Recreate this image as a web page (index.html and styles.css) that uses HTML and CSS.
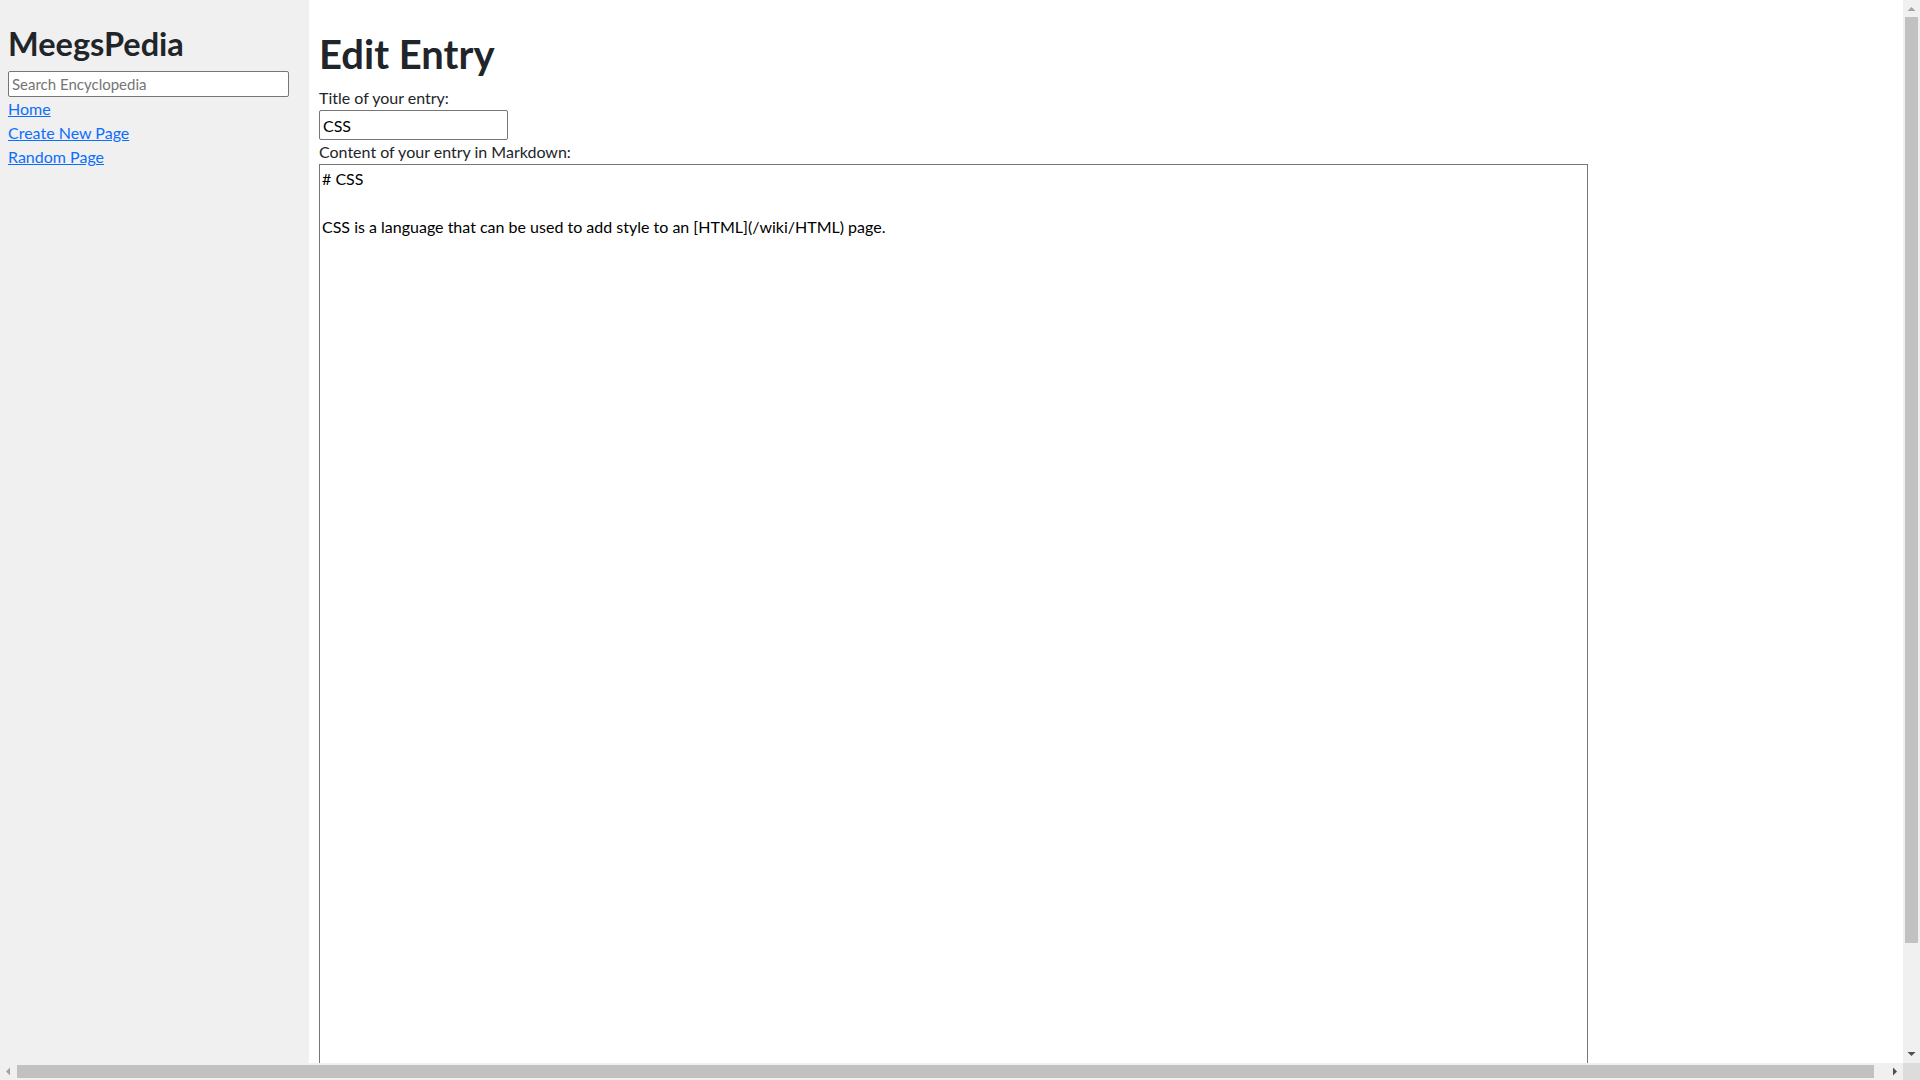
FILE: index.html
```html
<!DOCTYPE html>
<html lang="en">
<head>
<meta charset="utf-8">
<title>Edit Entry</title>
<link rel="stylesheet" href="styles.css">
</head>
<body>
<div class="page">
  <aside class="sidebar">
    <h2 class="brand">MeegsPedia</h2>
    <form class="search-form">
      <input class="search" type="text" name="q" placeholder="Search Encyclopedia">
    </form>
    <div class="nav-item"><a href="#">Home</a></div>
    <div class="nav-item"><a href="#">Create New Page</a></div>
    <div class="nav-item"><a href="#">Random Page</a></div>
  </aside>
  <main class="main">
    <h1 class="page-title">Edit Entry</h1>
    <form class="entry-form">
      <label class="field-label" for="title">Title of your entry:</label>
      <input class="title-input" id="title" type="text" name="title" value="CSS">
      <label class="field-label" for="content">Content of your entry in Markdown:</label>
      <textarea class="content-input" id="content" name="content"># CSS

CSS is a language that can be used to add style to an [HTML](/wiki/HTML) page.</textarea>
      <input class="save-btn" type="submit" value="Save">
    </form>
  </main>
</div>

<div class="vscroll" aria-hidden="true">
  <div class="sb-btn"><svg width="17" height="17" viewBox="0 0 17 17"><polygon points="4.5,11 12.5,11 8.5,7" fill="#a3a3a3"/></svg></div>
  <div class="sb-track sb-track-v"><div class="sb-thumb-v"></div></div>
  <div class="sb-btn"><svg width="17" height="17" viewBox="0 0 17 17"><polygon points="4.5,6 12.5,6 8.5,10" fill="#505050"/></svg></div>
</div>
<div class="hscroll" aria-hidden="true">
  <div class="sb-btn"><svg width="17" height="17" viewBox="0 0 17 17"><polygon points="10,4.5 10,12.5 6,8.5" fill="#a3a3a3"/></svg></div>
  <div class="sb-track sb-track-h"><div class="sb-thumb-h"></div></div>
  <div class="sb-btn"><svg width="17" height="17" viewBox="0 0 17 17"><polygon points="7,4.5 7,12.5 11,8.5" fill="#505050"/></svg></div>
</div>
<div class="sb-corner" aria-hidden="true"></div>
</body>
</html>
```
FILE: styles.css
```css
html, body {
  margin: 0;
  padding: 0;
  background: #ffffff;
}

body {
  font-family: Lato, "Liberation Sans", sans-serif;
  font-size: 16px;
  line-height: 24px;
  color: #212529;
}

.page {
  display: flex;
  width: 1915px;
  align-items: flex-start;
}

.sidebar {
  flex: 0 0 309px;
  box-sizing: border-box;
  height: 100vh;
  background: #f0f0f0;
  padding: 24px 20px 0 8px;
}

.brand {
  margin: 0 0 8px 0;
  font-size: 32.5px;
  line-height: 39px;
  font-weight: 700;
  color: #212529;
}

.search-form {
  margin: 0;
}

.search {
  display: block;
  box-sizing: border-box;
  width: 281px;
  height: 26px;
  margin: 0;
  padding: 1px 3px;
  border: 1px solid #767676;
  border-radius: 2px;
  background: #ffffff;
  font-family: Lato, "Liberation Sans", sans-serif;
  font-size: 15px;
  color: #212529;
}

.search::placeholder {
  color: #757575;
}

.nav-item {
  font-size: 16px;
  line-height: 24px;
}

.nav-item a {
  color: #0d6efd;
  text-decoration: underline;
}

.main {
  flex: 1 1 auto;
  box-sizing: border-box;
  padding: 10px;
}

.page-title {
  margin: 0 0 8px 0;
  padding-top: 20px;
  font-size: 40px;
  line-height: 48px;
  font-weight: 700;
  color: #212529;
}

.entry-form {
  display: flex;
  flex-direction: column;
  align-items: flex-start;
  margin: 0;
}

.field-label {
  display: block;
  line-height: 24px;
}

.title-input {
  box-sizing: border-box;
  width: 189px;
  height: 30px;
  margin: 0;
  padding: 1px 3px;
  border: 1px solid #767676;
  border-radius: 2px;
  font-family: Lato, "Liberation Sans", sans-serif;
  font-size: 16px;
  color: #000000;
}

.content-input {
  box-sizing: border-box;
  width: 80%;
  height: 90vh;
  margin: 0;
  padding: 2px;
  border: 1px solid #767676;
  border-radius: 0;
  resize: vertical;
  font-family: Lato, "Liberation Sans", sans-serif;
  font-size: 16px;
  line-height: 24px;
  color: #000000;
}

.save-btn {
  margin-top: 4px;
  height: 31px;
  padding: 1px 10px;
  font-family: Lato, "Liberation Sans", sans-serif;
  font-size: 16px;
}

/* classic window scrollbars (drawn over the page) */
.vscroll {
  position: fixed;
  top: 0;
  right: 0;
  width: 17px;
  height: 1063px;
  display: flex;
  flex-direction: column;
  background: #f0f0f0;
}

.hscroll {
  position: fixed;
  left: 0;
  bottom: 0;
  width: 1903px;
  height: 17px;
  display: flex;
  flex-direction: row;
  background: #f0f0f0;
}

.sb-btn {
  flex: 0 0 17px;
  width: 17px;
  height: 17px;
}

.sb-btn svg {
  display: block;
}

.sb-track {
  flex: 1 1 auto;
  display: flex;
}

.sb-track-v {
  flex-direction: column;
  padding: 0 2px;
}

.sb-thumb-v {
  height: 926px;
  background: #c1c1c1;
}

.sb-track-h {
  flex-direction: row;
  padding: 2px 0;
}

.sb-thumb-h {
  width: 1857px;
  background: #c1c1c1;
}

.sb-corner {
  position: fixed;
  right: 0;
  bottom: 0;
  width: 17px;
  height: 17px;
  background: #dcdcdc;
}
```
